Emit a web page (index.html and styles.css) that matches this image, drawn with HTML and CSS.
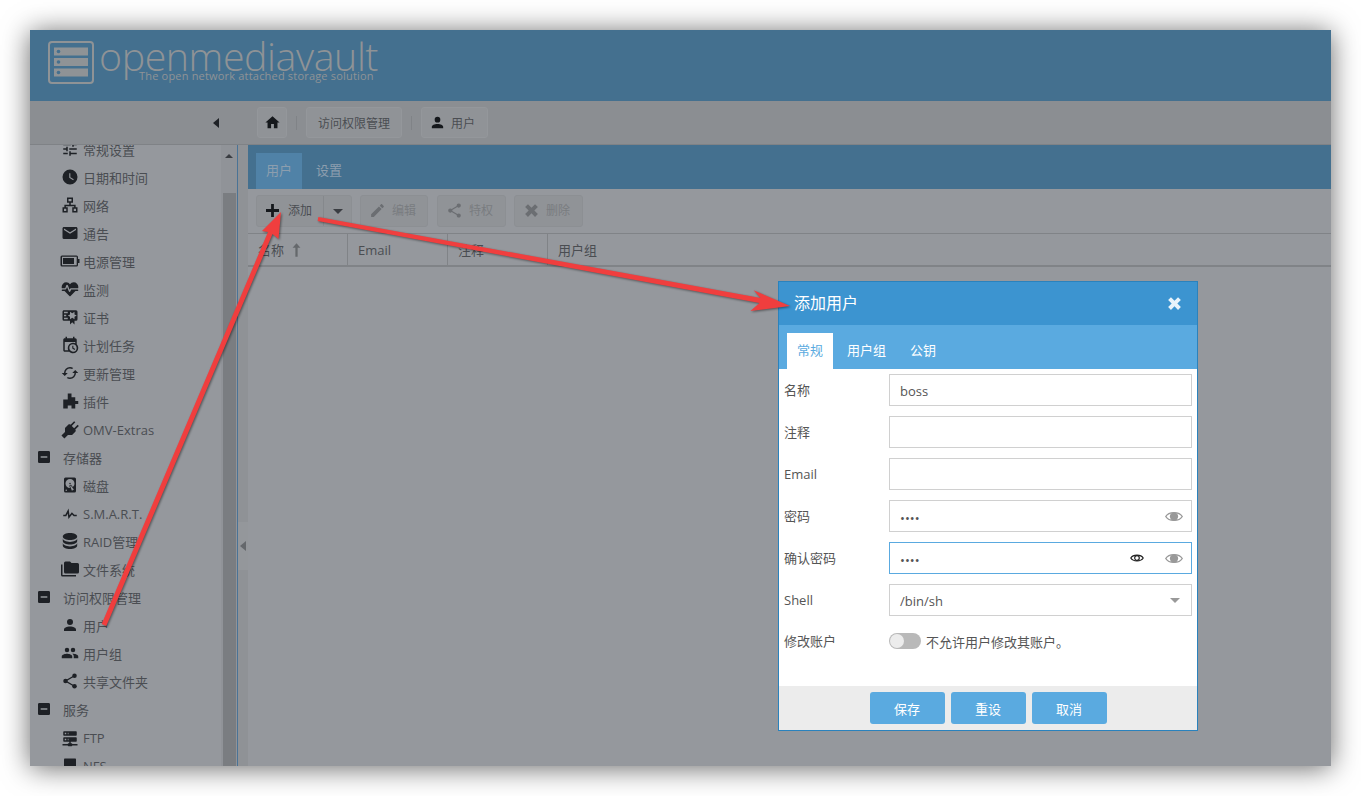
FILE: index.html
```html
<!DOCTYPE html>
<html lang="zh-CN">
<head>
  <meta charset="UTF-8">
  <title>openmediavault</title>
  <link rel="stylesheet" href="styles.css">
</head>
<body>
  <svg class="sprite" width="0" height="0">
    <symbol id="i-home" viewBox="0 0 24 24"><path d="M10,20V14H14V20H19V12H22L12,3L2,12H5V20H10Z"/></symbol>
    <symbol id="i-user" viewBox="0 0 24 24"><path d="M12,4A4,4 0 0,1 16,8A4,4 0 0,1 12,12A4,4 0 0,1 8,8A4,4 0 0,1 12,4M12,14C16.42,14 20,15.79 20,18V20H4V18C4,15.79 7.58,14 12,14Z"/></symbol>
    <symbol id="i-minus" viewBox="0 0 24 24"><path d="M17,13H7V11H17M19,3H5C3.89,3 3,3.89 3,5V19A2,2 0 0,0 5,21H19A2,2 0 0,0 21,19V5C21,3.89 20.1,3 19,3Z"/></symbol>
    <symbol id="i-eye" viewBox="0 0 24 16"><path d="M1,8C5,1 19,1 23,8C19,15 5,15 1,8Z" fill="none" stroke="currentColor" stroke-width="1.8"/><circle cx="12" cy="8" r="5.5"/></symbol>
    <symbol id="i-share" viewBox="0 0 24 24"><path d="M18,16.08C17.24,16.08 16.56,16.38 16,16.85L8.91,12.7C8.96,12.47 9,12.24 9,12C9,11.76 8.96,11.53 8.91,11.3L15.96,7.19C16.5,7.69 17.21,8 18,8A3,3 0 0,0 21,5A3,3 0 0,0 18,2A3,3 0 0,0 15,5C15,5.24 15.04,5.47 15.09,5.7L8.04,9.81C7.5,9.31 6.79,9 6,9A3,3 0 0,0 3,12A3,3 0 0,0 6,15C6.79,15 7.5,14.69 8.04,14.19L15.16,18.34C15.11,18.55 15.08,18.77 15.08,19C15.08,20.61 16.39,21.91 18,21.91C19.61,21.91 20.92,20.61 20.92,19A2.92,2.92 0 0,0 18,16.08Z"/></symbol>
    <symbol id="i-close" viewBox="0 0 24 24"><path d="M7,3L12,8L17,3L21,7L16,12L21,17L17,21L12,16L7,21L3,17L8,12L3,7Z"/></symbol>
  </svg>

  <div class="window">
    <header class="top">
      <svg class="logo-icon" viewBox="0 0 46 43">
        <rect class="logo-frame" x="1" y="1" width="44" height="41" rx="3"/>
        <rect class="logo-bar" x="6" y="6.5" width="34" height="8"/>
        <rect class="logo-bar" x="6" y="17" width="34" height="8"/>
        <rect class="logo-bar" x="6" y="27.5" width="34" height="8"/>
        <circle class="logo-dot" cx="10.5" cy="10.5" r="1.8"/>
        <circle class="logo-dot" cx="10.5" cy="21" r="1.8"/>
        <circle class="logo-dot" cx="10.5" cy="31.5" r="1.8"/>
      </svg>
      <div class="logo-text">
        <div class="logo-name">openmediavault</div>
        <div class="logo-tag">The open network attached storage solution</div>
      </div>
    </header>

    <div class="crumbbar">
      <div class="collapse"><span class="tri-left"></span></div>
      <div class="crumbs">
        <span class="crumb crumb-home"><svg class="ic16"><use href="#i-home"/></svg></span>
        <span class="crumb-sep"></span>
        <span class="crumb">访问权限管理</span>
        <span class="crumb-sep"></span>
        <span class="crumb crumb-user"><svg class="ic16"><use href="#i-user"/></svg>用户</span>
      </div>
    </div>

    <div class="content">
      <aside class="sidebar">
        <ul class="nav">
          <li class="item"><span class="nav-ic"><svg viewBox="0 0 24 24"><path d="M3,17V19H9V17H3M3,5V7H13V5H3M13,21V19H21V17H13V15H11V21H13M7,9V11H3V13H7V15H9V9H7M21,13V11H11V13H21M15,9H17V7H21V5H17V3H15V9Z"/></svg></span>常规设置</li>
          <li class="item"><span class="nav-ic"><svg viewBox="0 0 24 24"><path d="M12,2A10,10 0 0,0 2,12A10,10 0 0,0 12,22A10,10 0 0,0 22,12A10,10 0 0,0 12,2M16.2,16.2L11,13V7H12.5V12.2L17,14.9L16.2,16.2Z"/></svg></span>日期和时间</li>
          <li class="item"><span class="nav-ic"><svg viewBox="0 0 24 24"><path d="M9,3H15V8H9ZM3,16H8V21H3ZM16,16H21V21H16ZM12,8V12.5M5.5,16V12.5H18.5V16" fill="none" stroke="currentColor" stroke-width="2"/></svg></span>网络</li>
          <li class="item"><span class="nav-ic"><svg viewBox="0 0 24 24"><path d="M20,8L12,13L4,8V6L12,11L20,6M20,4H4C2.89,4 2,4.89 2,6V18A2,2 0 0,0 4,20H20A2,2 0 0,0 22,18V6C22,4.89 21.1,4 20,4Z"/></svg></span>通告</li>
          <li class="item"><span class="nav-ic"><svg class="wide" viewBox="0 0 20 12"><path d="M2,0.5H16.5A1.5,1.5 0 0,1 18,2V4H19.5V8H18V10A1.5,1.5 0 0,1 16.5,11.5H2A1.5,1.5 0 0,1 0.5,10V2A1.5,1.5 0 0,1 2,0.5M2,1.8V10.2H16.7V1.8H2M3,3H14V9H3V3Z" fill-rule="evenodd"/></svg></span>电源管理</li>
          <li class="item"><span class="nav-ic"><svg class="big" viewBox="0 0 24 24"><path d="M7.5,4A5.5,5.5 0 0,0 2,9.5C2,10 2.09,10.5 2.22,11H6.3L7.57,7.63C7.87,6.83 9.05,6.75 9.43,7.63L11.5,13L12.09,11.58C12.22,11.25 12.57,11 13,11H21.78C21.91,10.5 22,10 22,9.5A5.5,5.5 0 0,0 16.5,4C14.64,4 13,4.93 12,6.34C11,4.93 9.36,4 7.5,4M3,12.5A1,1 0 0,0 2,13.5A1,1 0 0,0 3,14.5H5.44L11,20C12,20.9 12,20.9 13,20L18.56,14.5H21A1,1 0 0,0 22,13.5A1,1 0 0,0 21,12.5H13.4L12.47,14.8C12.07,15.81 10.92,15.67 10.55,14.83L8.5,9.5L7.54,11.83C7.39,12.21 7.05,12.5 6.6,12.5H3Z"/></svg></span>监测</li>
          <li class="item"><span class="nav-ic"><svg viewBox="0 0 24 24"><path d="M4,3C2.89,3 2,3.89 2,5V15A2,2 0 0,0 4,17H12V22L15,19L18,22V17H20A2,2 0 0,0 22,15V8L22,6V5A2,2 0 0,0 20,3H16V3H4M12,5L15,7L18,5V8.5L21,10L18,11.5V15L15,13L12,15V11.5L9,10L12,8.5V5M4,5H9V7H4V5M4,9H7V11H4V9M4,13H9V15H4V13Z"/></svg></span>证书</li>
          <li class="item"><span class="nav-ic"><svg viewBox="0 0 24 24"><path d="M15,13H16.5V15.82L18.94,17.23L18.19,18.53L15,16.69V13M19,8H5V19H9.67C9.24,18.09 9,17.07 9,16A7,7 0 0,1 16,9C17.07,9 18.09,9.24 19,9.67V8M5,21C3.89,21 3,20.1 3,19V5C3,3.89 3.89,3 5,3H6V1H8V3H16V1H18V3H19A2,2 0 0,1 21,5V11.1C22.24,12.36 23,14.09 23,16A7,7 0 0,1 16,23C14.09,23 12.36,22.24 11.1,21H5M16,11.15A4.85,4.85 0 0,0 11.15,16C11.15,18.68 13.32,20.85 16,20.85A4.85,4.85 0 0,0 20.85,16C20.85,13.32 18.68,11.15 16,11.15Z"/></svg></span>计划任务</li>
          <li class="item"><span class="nav-ic"><svg viewBox="0 0 24 24"><path transform="rotate(90 12 12)" d="M12,18A6,6 0 0,1 6,12C6,11 6.25,10.03 6.7,9.2L5.24,7.74C4.46,8.97 4,10.43 4,12A8,8 0 0,0 12,20V23L16,19L12,15M12,4V1L8,5L12,9V6A6,6 0 0,1 18,12C18,13 17.75,13.97 17.3,14.8L18.76,16.26C19.54,15.03 20,13.57 20,12A8,8 0 0,0 12,4Z"/></svg></span>更新管理</li>
          <li class="item"><span class="nav-ic"><svg viewBox="0 0 24 24"><path d="M9,2H14V7H19V12H23V16H19V22H14V18H9V22H3V10H9Z"/></svg></span>插件</li>
          <li class="item item-latin"><span class="nav-ic"><svg class="big" viewBox="0 0 24 24"><path transform="rotate(45 12 12)" d="M16,7V1H14V7H10V1H8V7C7,7 6,8 6,9V14.5L9.5,18V24H14.5V18L18,14.5V9C18,8 17,7 16,7Z"/></svg></span>OMV-Extras</li>
          <li class="group"><svg class="group-ic"><use href="#i-minus"/></svg>存储器</li>
          <li class="item"><span class="nav-ic"><svg viewBox="0 0 24 24"><path d="M6,2H18A2,2 0 0,1 20,4V20A2,2 0 0,1 18,22H6A2,2 0 0,1 4,20V4A2,2 0 0,1 6,2M12,4A6,6 0 0,0 6,10C6,13.31 8.69,16 12.1,16L11.22,13.77C10.95,13.29 11.11,12.68 11.59,12.4L12.45,11.9C12.93,11.63 13.54,11.79 13.82,12.27L15.74,14.69C17.12,13.59 18,11.9 18,10A6,6 0 0,0 12,4M12,9A1,1 0 0,1 13,10A1,1 0 0,1 12,11A1,1 0 0,1 11,10A1,1 0 0,1 12,9M7,18A1,1 0 0,0 6,19A1,1 0 0,0 7,20A1,1 0 0,0 8,19A1,1 0 0,0 7,18M12.09,13.27L14.58,19.58L17.17,18.08L12.95,12.77L12.09,13.27Z"/></svg></span>磁盘</li>
          <li class="item item-latin"><span class="nav-ic"><svg viewBox="0 0 24 24"><path d="M3,13H5.79L10.1,4.79L11.28,13.75L14.5,9.66L17.83,13H21V15H17L14.67,12.67L9.92,18.73L8.94,11.31L7,15H3V13Z"/></svg></span>S.M.A.R.T.</li>
          <li class="item"><span class="nav-ic"><svg viewBox="3 2 18 20"><path d="M12,3C7.58,3 4,4.79 4,7C4,9.21 7.58,11 12,11C16.42,11 20,9.21 20,7C20,4.79 16.42,3 12,3M4,9V12C4,14.21 7.58,16 12,16C16.42,16 20,14.21 20,12V9C20,11.21 16.42,13 12,13C7.58,13 4,11.21 4,9M4,14V17C4,19.21 7.58,21 12,21C16.42,21 20,19.21 20,17V14C20,16.21 16.42,18 12,18C7.58,18 4,16.21 4,14Z"/></svg></span>RAID管理</li>
          <li class="item"><span class="nav-ic"><svg class="wide" viewBox="0 0 24 24"><path d="M22,4H14L12,2H6A2,2 0 0,0 4,4V16A2,2 0 0,0 6,18H22A2,2 0 0,0 24,16V6A2,2 0 0,0 22,4M2,6H0V20A2,2 0 0,0 2,22H20V20H2V6Z"/></svg></span>文件系统</li>
          <li class="group"><svg class="group-ic"><use href="#i-minus"/></svg>访问权限管理</li>
          <li class="item"><span class="nav-ic"><svg><use href="#i-user"/></svg></span>用户</li>
          <li class="item"><span class="nav-ic"><svg viewBox="0 0 24 24"><path d="M16,13C15.71,13 15.38,13 15.03,13.05C16.19,13.89 17,15 17,16.5V19H23V16.5C23,14.17 18.33,13 16,13M8,13C5.67,13 1,14.17 1,16.5V19H15V16.5C15,14.17 10.33,13 8,13M8,11A3,3 0 0,0 11,8A3,3 0 0,0 8,5A3,3 0 0,0 5,8A3,3 0 0,0 8,11M16,11A3,3 0 0,0 19,8A3,3 0 0,0 16,5A3,3 0 0,0 13,8A3,3 0 0,0 16,11Z"/></svg></span>用户组</li>
          <li class="item"><span class="nav-ic"><svg viewBox="0 0 24 24"><path d="M18,5L6,12L18,19" fill="none" stroke="currentColor" stroke-width="1.8"/><circle cx="18" cy="5" r="3"/><circle cx="6" cy="12" r="3"/><circle cx="18" cy="19" r="3"/></svg></span>共享文件夹</li>
          <li class="group"><svg class="group-ic"><use href="#i-minus"/></svg>服务</li>
          <li class="item item-latin"><span class="nav-ic"><svg viewBox="0 0 24 24"><path d="M13,19H14A1,1 0 0,1 15,20H22V22H15A1,1 0 0,1 14,23H10A1,1 0 0,1 9,22H2V20H9A1,1 0 0,1 10,19H11V17H4A1,1 0 0,1 3,16V12A1,1 0 0,1 4,11H20A1,1 0 0,1 21,12V16A1,1 0 0,1 20,17H13V19M4,3H20A1,1 0 0,1 21,4V8A1,1 0 0,1 20,9H4A1,1 0 0,1 3,8V4A1,1 0 0,1 4,3M9,7H10V5H9V7M9,15H10V13H9V15M5,5V7H7V5H5M5,13V15H7V13H5Z"/></svg></span>FTP</li>
          <li class="item item-latin"><span class="nav-ic"><svg viewBox="0 0 24 24"><path d="M5,2H19A1,1 0 0,1 20,3V21A1,1 0 0,1 19,22H5A1,1 0 0,1 4,21V3A1,1 0 0,1 5,2Z"/></svg></span>NFS</li>
        </ul>
        <div class="scrollbar">
          <span class="scroll-up"></span>
          <span class="scroll-thumb"></span>
        </div>
      </aside>

      <div class="splitter">
        <div class="split-handle"><span class="tri-left tri-small"></span></div>
      </div>

      <main class="main">
        <nav class="tabs">
          <span class="tab tab-on">用户</span>
          <span class="tab">设置</span>
        </nav>
        <div class="toolbar">
          <div class="btn-split">
            <span class="btn btn-main"><svg class="ic-plus" viewBox="0 0 14 14"><path d="M5.5,0H8.5V5.5H14V8.5H8.5V14H5.5V8.5H0V5.5H5.5Z"/></svg>添加</span>
            <span class="btn btn-drop"><span class="tri-down"></span></span>
          </div>
          <span class="btn btn-off btn-edit"><svg class="ic16" viewBox="0 0 24 24"><path d="M20.71,7.04C21.1,6.65 21.1,6 20.71,5.63L18.37,3.29C18,2.9 17.35,2.9 16.96,3.29L15.12,5.12L18.87,8.87M3,17.25V21H6.75L17.81,9.93L14.06,6.18L3,17.25Z"/></svg>编辑</span>
          <span class="btn btn-off btn-priv"><svg class="ic16"><use href="#i-share"/></svg>特权</span>
          <span class="btn btn-off btn-del"><svg class="ic16"><use href="#i-close"/></svg>删除</span>
        </div>
        <div class="thead">
          <div class="th th-name">名称<svg class="ic-sort" viewBox="0 0 8 12"><path d="M4,0L7.5,4H5V12H3V4H0.5Z"/></svg></div>
          <div class="th">Email</div>
          <div class="th">注释</div>
          <div class="th">用户组</div>
        </div>
      </main>
    </div>
  </div>

  <section class="dialog">
    <div class="dlg-title">
      <span class="dlg-name">添加用户</span>
      <svg class="dlg-close"><use href="#i-close"/></svg>
    </div>
    <div class="dlg-tabs">
      <span class="dlg-tab dlg-tab-on">常规</span>
      <span class="dlg-tab">用户组</span>
      <span class="dlg-tab">公钥</span>
    </div>
    <form class="dlg-form">
      <div class="row"><label>名称</label><div class="field"><span class="val">boss</span></div></div>
      <div class="row"><label>注释</label><div class="field"></div></div>
      <div class="row"><label class="lbl-latin">Email</label><div class="field"></div></div>
      <div class="row"><label>密码</label><div class="field"><span class="dots">••••</span><svg class="eye"><use href="#i-eye"/></svg></div></div>
      <div class="row"><label>确认密码</label><div class="field field-focus"><span class="dots">••••</span><svg class="eye-black" viewBox="0 0 14 10"><path d="M0.8,5C3,1.2 11,1.2 13.2,5C11,8.8 3,8.8 0.8,5Z" fill="none" stroke="currentColor" stroke-width="1.2"/><circle cx="7" cy="5" r="2.3" fill="none" stroke="currentColor" stroke-width="1.2"/></svg><svg class="eye"><use href="#i-eye"/></svg></div></div>
      <div class="row"><label class="lbl-latin">Shell</label><div class="field"><span class="val">/bin/sh</span><span class="select-arrow"></span></div></div>
      <div class="row row-switch"><label>修改账户</label><div class="switch-line"><span class="switch"><span class="knob"></span></span>不允许用户修改其账户。</div></div>
    </form>
    <div class="dlg-foot">
      <span class="dlg-btn">保存</span>
      <span class="dlg-btn">重设</span>
      <span class="dlg-btn">取消</span>
    </div>
  </section>

  <svg class="arrows" viewBox="0 0 1361 796">
    <polygon points="101.7,624 106.3,626 272.5,234 278.5,239 281,212 262,231 268,232"/>
    <polygon points="318.3,217 760.5,298 753.6,290.2 790,306 750.4,311 759.5,303 317.7,221"/>
  </svg>
</body>
</html>
```

FILE: styles.css
```css
* {
  box-sizing: border-box;
}
html {
  overflow: hidden;
}
body {
  margin: 0;
  padding: 30px;
  height: 796px;
  position: relative;
  background: #fff;
  font-family: "Open Sans", "Noto Sans CJK SC", sans-serif;
  font-size: 13px;
  color: #4a4d52;
}
.sprite {
  position: absolute;
}
svg {
  fill: currentColor;
  display: block;
  flex: none;
}
.window {
  width: 1301px;
  height: 736px;
  display: flex;
  flex-direction: column;
  overflow: hidden;
  background: #95989d;
  box-shadow: 0 2px 26px rgba(0, 0, 0, 0.6);
}

/* header */
.top {
  height: 71px;
  flex: none;
  background: #44708f;
  display: flex;
  padding: 11px 0 0 18px;
  gap: 5px;
}
.logo-icon {
  width: 46px;
  height: 43px;
}
.logo-frame {
  fill: none;
  stroke: #8f9396;
  stroke-width: 2;
}
.logo-bar {
  fill: #8f9396;
}
.logo-dot {
  fill: #44708f;
}
.logo-text {
  color: #8f9396;
}
.logo-name {
  font-family: "Open Sans", sans-serif;
  font-weight: 300;
  font-size: 39.3px;
  line-height: 36px;
  letter-spacing: -0.4px;
  margin-top: -3px;
}
.logo-tag {
  font-size: 11px;
  line-height: 12px;
  margin: -4px 0 0 40px;
  letter-spacing: 0.19px;
  white-space: nowrap;
}

/* breadcrumb */
.crumbbar {
  height: 44px;
  flex: none;
  background: #8b8e92;
  display: flex;
  align-items: center;
  border-bottom: 1px solid #7f8286;
}
.collapse {
  width: 218px;
  display: flex;
  justify-content: center;
  padding-left: 153px;
}
.tri-left {
  display: block;
  border: 5px solid transparent;
  border-left: 0;
  border-right: 6px solid #1e2126;
}
.crumbs {
  display: flex;
  align-items: center;
  margin-left: 9px;
  font-size: 12px;
}
.crumb {
  height: 31px;
  padding: 0 11px;
  display: flex;
  align-items: center;
  background: #909397;
  border: 1px solid #94979b;
  border-radius: 3px;
}
.crumb-home {
  width: 30px;
  padding: 0;
  justify-content: center;
  color: #15181c;
}
.crumb-user {
  padding: 0 12px 0 7px;
  gap: 5px;
}
.crumb .ic16 {
  color: #15181c;
}
.crumb-sep {
  width: 1px;
  height: 14px;
  margin: 0 9px;
  background: #808387;
}
.ic16 {
  width: 17px;
  height: 17px;
}

/* sidebar */
.content {
  flex: 1;
  display: flex;
  min-height: 0;
}
.sidebar {
  width: 208px;
  flex: none;
  display: flex;
  overflow: hidden;
  border-right: 1px solid #4a7396;
}
.nav {
  list-style: none;
  margin: -10px 0 0;
  padding: 0;
  flex: 1;
}
.item,
.group {
  height: 28px;
  display: flex;
  align-items: center;
}
.item {
  padding-left: 30px;
}
.item-latin {
  padding-top: 2px;
}
.group {
  padding-left: 6px;
}
.nav-ic {
  width: 20px;
  margin-right: 3px;
  display: flex;
  justify-content: center;
  color: #1e2126;
}
.nav-ic svg {
  width: 18px;
  height: 18px;
}
.nav-ic svg.wide {
  width: 20px;
}
.nav-ic svg.big {
  width: 20px;
  height: 20px;
}
.group-ic {
  width: 16px;
  height: 16px;
  margin-right: 11px;
  color: #1e2126;
}
.scrollbar {
  width: 16px;
  background: #909398;
  padding: 0 1px;
  display: flex;
  flex-direction: column;
  align-items: center;
}
.scroll-up {
  margin-top: 9px;
  border: 4px solid transparent;
  border-top: 0;
  border-bottom: 4px solid #3a3d42;
}
.scroll-thumb {
  width: 13px;
  flex: 1;
  margin-top: 35px;
  background: #7a7d81;
}
.splitter {
  width: 10px;
  flex: none;
  background: #8f9296;
  padding-top: 377px;
}
.split-handle {
  height: 48px;
  background: #94979b;
  display: flex;
  align-items: center;
  justify-content: center;
}
.tri-small {
  border-right-color: #65686c;
}

/* main */
.main {
  flex: 1;
  min-width: 0;
}
.tabs {
  height: 44px;
  background: #44708f;
  padding: 8px 0 0 8px;
  display: flex;
  gap: 4px;
  color: #8c9eae;
}
.tab {
  width: 46px;
  display: flex;
  align-items: center;
  justify-content: center;
  padding-bottom: 4px;
}
.tab-on {
  background: #5082a7;
}
.toolbar {
  height: 44px;
  padding: 6px 8px 0;
  display: flex;
  gap: 8px;
  font-size: 12px;
}
.btn-split {
  display: flex;
  border: 1px solid #8c8f93;
  border-radius: 3px;
  background: #909397;
  height: 32px;
}
.btn {
  display: flex;
  align-items: center;
  height: 32px;
}
.btn-main {
  width: 67px;
  height: 30px;
  padding: 0 0 2px 9px;
  gap: 9px;
  border-right: 1px solid #85888c;
}
.ic-plus {
  width: 13px;
  height: 13px;
  color: #15181c;
}
.btn-drop {
  width: 27px;
  height: 30px;
  justify-content: center;
}
.tri-down {
  border: 5px solid transparent;
  border-bottom: 0;
  border-top: 5px solid #3a3d42;
}
.btn-off {
  background: #909397;
  border: 1px solid #8c8f93;
  border-radius: 3px;
  color: #797c80;
  padding: 0 0 2px 8px;
  gap: 6px;
}
.btn-off .ic16 {
  color: #6b6e72;
}
.btn-edit {
  width: 68px;
  margin-right: 1px;
}
.btn-priv {
  width: 69px;
}
.btn-del {
  width: 69px;
}
.thead {
  height: 34px;
  display: flex;
  border-top: 1px solid #808387;
  border-bottom: 2px solid #808387;
}
.th {
  width: 100px;
  padding-left: 10px;
  display: flex;
  align-items: center;
  border-right: 1px solid #808387;
}
.th:last-child {
  border-right: 0;
}
.th-name {
  gap: 8px;
}
.ic-sort {
  width: 9px;
  height: 14px;
  color: #65686c;
}

/* dialog */
.dialog {
  position: absolute;
  left: 778px;
  top: 281px;
  width: 420px;
  height: 450px;
  background: #fff;
  border: 1px solid #2a82bd;
  display: flex;
  flex-direction: column;
  color: #555;
}
.dlg-title {
  height: 43px;
  flex: none;
  background: #3c94d0;
  color: #fff;
  font-size: 16px;
  display: flex;
  align-items: center;
  justify-content: space-between;
  padding: 0 14px 0 15px;
}
.dlg-name {
  padding-bottom: 4px;
}
.dlg-close {
  width: 17px;
  height: 17px;
  color: #e9f3fa;
}
.dlg-tabs {
  height: 44px;
  flex: none;
  background: #5aaae0;
  padding: 8px 0 0 8px;
  display: flex;
  color: #fff;
}
.dlg-tab {
  padding: 0 15px 4px;
  display: flex;
  align-items: center;
  margin-right: -6px;
}
.dlg-tab-on {
  background: #fff;
  color: #5aaae0;
  width: 46px;
  justify-content: center;
  padding: 0 0 4px;
  margin-right: -1px;
}
.dlg-form {
  flex: 1;
  padding: 5px 5px 0;
}
.row {
  height: 32px;
  margin-bottom: 10px;
  display: flex;
  align-items: center;
}
.row label {
  width: 105px;
  flex: none;
  padding-bottom: 2px;
}
.row label.lbl-latin {
  padding-bottom: 0;
}
.row-switch {
  padding-bottom: 2px;
}
.field {
  width: 303px;
  height: 32px;
  border: 1px solid #d0d0d0;
  padding: 0 10px;
  display: flex;
  align-items: center;
}
.field-focus {
  border-color: #5aaae0;
}
.val {
  padding-top: 2px;
}
.dots {
  font-size: 13px;
  flex: 1;
  padding-top: 3px;
}
.eye {
  width: 18px;
  height: 13px;
  margin-right: -2px;
  color: #999;
}
.eye-black {
  width: 14px;
  height: 10px;
  margin-right: 21px;
  color: #222;
}
.select-arrow {
  margin-left: auto;
  margin-right: 1px;
  border: 5px solid transparent;
  border-bottom: 0;
  border-top: 5px solid #999;
}
.switch-line {
  display: flex;
  align-items: center;
  gap: 5px;
}
.switch {
  width: 32px;
  height: 16px;
  border-radius: 8px;
  background: #b9b9b9;
  padding: 1px;
}
.knob {
  display: block;
  width: 14px;
  height: 14px;
  border-radius: 50%;
  background: #ececec;
}
.dlg-foot {
  height: 44px;
  flex: none;
  background: #ececec;
  display: flex;
  justify-content: center;
  gap: 6px;
  padding-top: 6px;
}
.dlg-btn {
  width: 75px;
  height: 32px;
  background: #5aaae0;
  border-radius: 3px;
  color: #fff;
  display: flex;
  align-items: center;
  justify-content: center;
}

/* red annotation arrows */
.arrows {
  position: absolute;
  left: 0;
  top: 0;
  width: 1361px;
  height: 796px;
  pointer-events: none;
  filter: drop-shadow(1px 1px 1px rgba(0, 0, 0, 0.45));
}
.arrows polygon {
  fill: #f03e3e;
}
```
